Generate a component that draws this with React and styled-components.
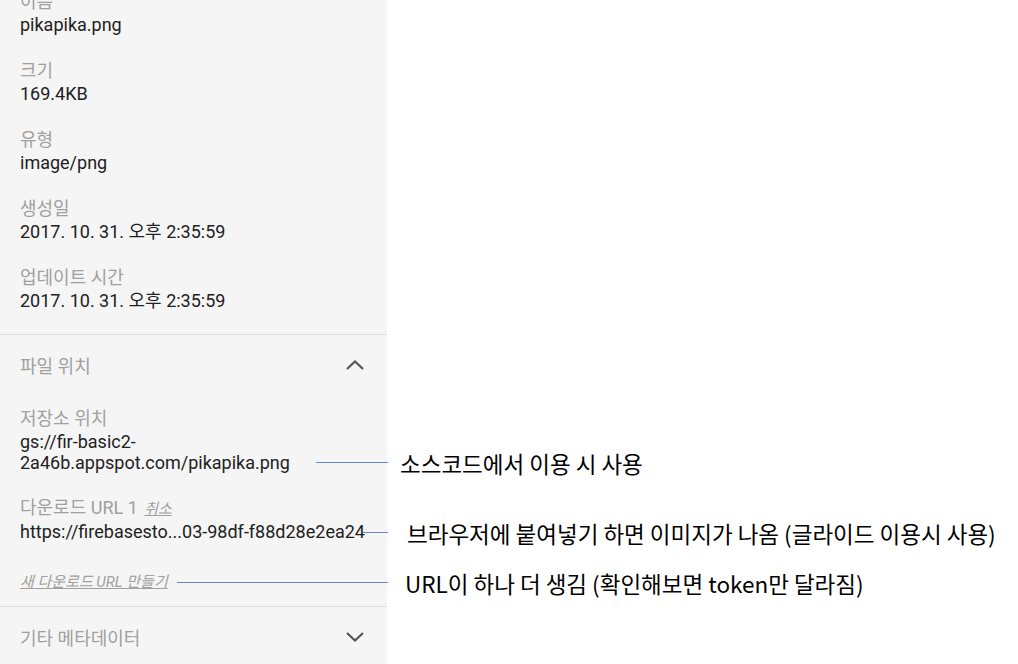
import styled, { createGlobalStyle } from "styled-components";

const GlobalStyle = createGlobalStyle`
  html, body {
    margin: 0;
    padding: 0;
    background: #ffffff;
  }
`;

const Page = styled.div`
  display: flex;
  height: 100vh;
  overflow: hidden;
  font-family: Roboto, "Noto Sans CJK KR", sans-serif;
`;

const Panel = styled.aside`
  width: 387px;
  flex-shrink: 0;
  margin-top: -10px;
  background: #f5f5f5;
`;

const Section = styled.section`
  padding: ${(p) => p.$pad || "0 20px"};
  border-bottom: ${(p) => (p.$divider ? "1px solid #dedede" : "none")};
`;

const Field = styled.div`
  margin-bottom: ${(p) => (p.$last ? 0 : p.$gap || 24)}px;
`;

const Label = styled.div`
  font-size: 18px;
  line-height: 24px;
  color: #a0a0a0;
  white-space: nowrap;
`;

const Value = styled.div`
  position: relative;
  font-size: 18px;
  line-height: 21px;
  color: #212121;
`;

const CancelLink = styled.span`
  font-size: 15px;
  font-style: italic;
  text-decoration: underline;
  color: #a0a0a0;
  margin-left: 2px;
`;

const NewUrlLink = styled.div`
  position: relative;
  margin-top: 30px;
  font-size: 15px;
  line-height: 21px;
  font-style: italic;
  text-decoration: underline;
  color: #a0a0a0;
`;

const Header = styled.div`
  height: 60px;
  padding: 0 20px;
  display: flex;
  align-items: center;
  justify-content: space-between;
  font-size: 18px;
  color: #a0a0a0;
`;

const Chevron = styled.svg`
  width: 18px;
  height: 10px;
  margin-right: 3px;
  fill: none;
  stroke: #555555;
  stroke-width: 2.2;
`;

const Callout = styled.div`
  position: absolute;
  top: ${(p) => p.$y}px;
  left: ${(p) => p.$from}px;
  display: flex;
  align-items: center;
  transform: translateY(-50%);
  pointer-events: none;
`;

const Leader = styled.span`
  width: ${(p) => p.$len}px;
  height: 1.5px;
  background: #6589c4;
`;

const NoteText = styled.span`
  margin-left: ${(p) => p.$gap}px;
  font-family: "Noto Sans CJK KR", sans-serif;
  font-style: normal;
  font-size: 22.5px;
  line-height: 28px;
  color: #000000;
  white-space: nowrap;
`;

const ChevronUp = () => (
  <Chevron viewBox="0 0 18 10">
    <polyline points="1,9 9,1.5 17,9" />
  </Chevron>
);

const ChevronDown = () => (
  <Chevron viewBox="0 0 18 10">
    <polyline points="1,1 9,8.5 17,1" />
  </Chevron>
);

const Note = ({ from, len, gap, y, children }) => (
  <Callout $from={from} $y={y}>
    <Leader $len={len} />
    <NoteText $gap={gap}>{children}</NoteText>
  </Callout>
);

const properties = [
  { label: "이름", value: "pikapika.png" },
  { label: "크기", value: "169.4KB" },
  { label: "유형", value: "image/png" },
  { label: "생성일", value: "2017. 10. 31. 오후 2:35:59" },
  { label: "업데이트 시간", value: "2017. 10. 31. 오후 2:35:59" },
];

export default function App() {
  return (
    <>
      <GlobalStyle />
      <Page>
        <Panel>
          <Section $divider $pad="0 20px 23px">
            {properties.map((item, i) => (
              <Field key={item.label} $last={i === properties.length - 1}>
                <Label>{item.label}</Label>
                <Value>{item.value}</Value>
              </Field>
            ))}
          </Section>

          <Header>
            <span>파일 위치</span>
            <ChevronUp />
          </Header>

          <Section $divider $pad="12px 20px 13px">
            <Field $gap={23}>
              <Label>저장소 위치</Label>
              <Value>
                gs://fir-basic2-2a46b.appspot.com/pikapika.png
                <Note from={296} len={72} gap={12} y={31.5}>
                  소스코드에서 이용 시 사용
                </Note>
              </Value>
            </Field>
            <Field $last>
              <Label>
                다운로드 URL 1 <CancelLink>취소</CancelLink>
              </Label>
              <Value>
                https://firebasesto...03-98df-f88d28e2ea24
                <Note from={343} len={25} gap={19} y={11.5}>
                  브라우저에 붙여넣기 하면 이미지가 나옴 (글라이드 이용시 사용)
                </Note>
              </Value>
            </Field>
            <NewUrlLink>
              새 다운로드 URL 만들기
              <Note from={157} len={211} gap={17} y={10.5}>
                URL이 하나 더 생김 (확인해보면 token만 달라짐)
              </Note>
            </NewUrlLink>
          </Section>

          <Header>
            <span>기타 메타데이터</span>
            <ChevronDown />
          </Header>
        </Panel>
      </Page>
    </>
  );
}
